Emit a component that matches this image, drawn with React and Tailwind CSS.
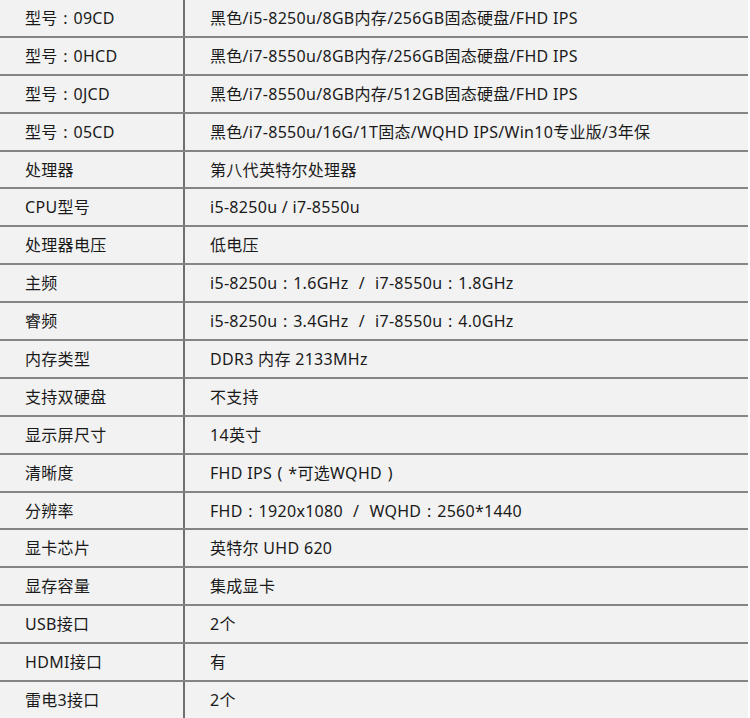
import React from "react";

const C = "\u2004:\u2004";
const S = "\u2004 / \u2004";

const rows = [
  ["型号" + C + "09CD", "黑色/i5-8250u/8GB内存/256GB固态硬盘/FHD IPS"],
  ["型号" + C + "0HCD", "黑色/i7-8550u/8GB内存/256GB固态硬盘/FHD IPS"],
  ["型号" + C + "0JCD", "黑色/i7-8550u/8GB内存/512GB固态硬盘/FHD IPS"],
  ["型号" + C + "05CD", "黑色/i7-8550u/16G/1T固态/WQHD IPS/Win10专业版/3年保"],
  ["处理器", "第八代英特尔处理器"],
  ["CPU型号", "i5-8250u / i7-8550u"],
  ["处理器电压", "低电压"],
  ["主频", "i5-8250u" + C + "1.6GHz" + S + "i7-8550u" + C + "1.8GHz"],
  ["睿频", "i5-8250u" + C + "3.4GHz" + S + "i7-8550u" + C + "4.0GHz"],
  ["内存类型", "DDR3 内存 2133MHz"],
  ["支持双硬盘", "不支持"],
  ["显示屏尺寸", "14英寸"],
  ["清晰度", "FHD IPS\u2004(\u2004*可选WQHD\u2004)"],
  ["分辨率", "FHD" + C + "1920x1080" + S + "WQHD" + C + "2560*1440"],
  ["显卡芯片", "英特尔 UHD 620"],
  ["显存容量", "集成显卡"],
  ["USB接口", "2个"],
  ["HDMI接口", "有"],
  ["雷电3接口", "2个"],
];

export default function App() {
  return (
    <div
      className="w-[750px] h-[718px] bg-white text-[16px] text-[#1a1a1a] tracking-[0.3px]"
      style={{ fontFamily: '"Noto Sans", "Noto Sans CJK SC", sans-serif' }}
    >
      <div className="w-[748px] h-[718px] bg-[#f2f2f2] flex flex-col">
        {rows.map(([k, v], i) => (
          <div
            key={i}
            className={`flex flex-1 ${i < rows.length - 1 ? "border-b-2 border-[#858585]" : ""}`}
          >
            <div className="w-[185px] shrink-0 border-r-2 border-[#6f6f6f] pl-[25px] flex items-center whitespace-pre">
              {k}
            </div>
            <div className="flex-1 pl-[25px] flex items-center whitespace-pre">{v}</div>
          </div>
        ))}
      </div>
    </div>
  );
}
